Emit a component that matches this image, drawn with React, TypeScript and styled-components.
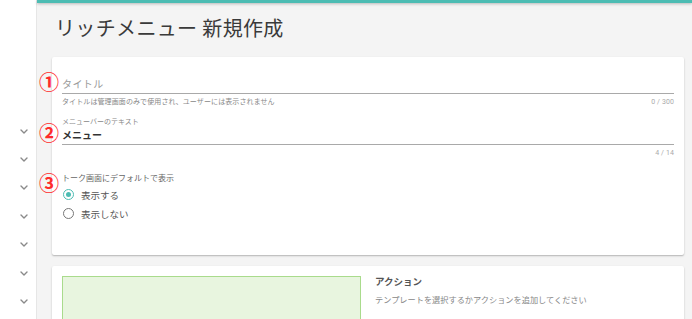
import React from "react";
import styled, { createGlobalStyle } from "styled-components";

const GlobalStyle = createGlobalStyle`
  html, body { margin: 0; padding: 0; }
  body {
    font-family: "Roboto", "Noto Sans CJK JP", sans-serif;
    background: #f4f4f4;
    color: #333;
  }
`;

const Layout = styled.div`
  display: flex;
  width: 692px;
  height: 319px;
  overflow: hidden;
`;

const Sidebar = styled.nav`
  width: 37px;
  flex: 0 0 37px;
  background: #fff;
  border-right: 1px solid #e6e6e6;
  box-shadow: 1px 0 2px rgba(0, 0, 0, 0.04);
  display: flex;
  flex-direction: column;
  align-items: center;
  padding-top: 117px;
  padding-left: 11px;
  box-sizing: border-box;
`;

const ChevronItem = styled.div`
  height: 28.4px;
  flex: 0 0 28.4px;
  display: flex;
  align-items: center;
  justify-content: center;
  color: #8a8a8a;
`;

const Main = styled.main`
  flex: 1;
  display: flex;
  flex-direction: column;
  background: #f4f4f4;
  min-width: 0;
`;

const TopBar = styled.div`
  height: 3px;
  flex: 0 0 3px;
  background: #4cbcb3;
  box-shadow: 0 1px 3px rgba(0, 0, 0, 0.25);
`;

const Content = styled.div`
  padding: 13px 8px 0 15px;
  display: flex;
  flex-direction: column;
  gap: 11px;
`;

const Title = styled.h1`
  margin: 0 0 6px 3px;
  font-family: "Noto Sans CJK JP", sans-serif;
  font-weight: 400;
  font-size: 20px;
  line-height: 24px;
  letter-spacing: 0.35px;
  color: #3a3a3a;
`;

const Card = styled.section<{ $pb?: number }>`
  position: relative;
  background: #fff;
  border-radius: 2px;
  box-shadow: 0 1px 2px rgba(0, 0, 0, 0.22), 0 1px 1px rgba(0, 0, 0, 0.06);
  padding: 10px 10px ${(p) => p.$pb ?? 10}px 10px;
  display: flex;
  flex-direction: column;
`;

const Field = styled.div<{ $mt?: number }>`
  position: relative;
  margin-top: ${(p) => p.$mt ?? 0}px;
`;

const FloatLabel = styled.div`
  height: 9px;
  font-size: 7px;
  line-height: 9px;
  color: #888;
`;

const InputLine = styled.div<{ $filled?: boolean }>`
  height: 17px;
  line-height: 17px;
  font-size: 10px;
  color: ${(p) => (p.$filled ? "#333" : "#999")};
  font-weight: ${(p) => (p.$filled ? 700 : 400)};
  border-bottom: 1px solid #a9a9a9;
  letter-spacing: ${(p) => (p.$filled ? "0" : "0.4px")};
`;

const HelperRow = styled.div`
  margin-top: 4px;
  display: flex;
  justify-content: space-between;
  font-size: 7px;
  line-height: 9px;
  color: #888;
  letter-spacing: 0.1px;
`;

const Counter = styled.span`
  color: #aaa;
  margin-left: auto;
`;

const Annotation = styled.span<{ $top: number }>`
  position: absolute;
  left: -23px;
  top: ${(p) => p.$top}px;
  width: 19px;
  height: 19px;
  font-family: "Noto Sans CJK JP", sans-serif;
  font-size: 20px;
  line-height: 19px;
  font-weight: 700;
  color: #ff2b2b;
  text-align: center;
`;

const GroupLabel = styled.div`
  font-size: 8px;
  line-height: 10px;
  color: #666;
`;

const RadioList = styled.div`
  margin-top: 1px;
  display: flex;
  flex-direction: column;
`;

const RadioRow = styled.label`
  height: 19px;
  display: flex;
  align-items: center;
  gap: 7px;
  padding-left: 1px;
  font-size: 9.5px;
  color: #555;
`;

const RadioCircle = styled.span<{ $checked?: boolean }>`
  width: 11px;
  height: 11px;
  box-sizing: border-box;
  border-radius: 50%;
  border: 1.5px solid ${(p) => (p.$checked ? "#4cbcb3" : "#777")};
  display: flex;
  align-items: center;
  justify-content: center;
  &::after {
    content: "";
    width: 5px;
    height: 5px;
    border-radius: 50%;
    background: ${(p) => (p.$checked ? "#4cbcb3" : "transparent")};
  }
`;

const ActionLayout = styled.div`
  display: flex;
  gap: 14px;
`;

const Preview = styled.div`
  width: 299px;
  height: 200px;
  box-sizing: border-box;
  background: #e8f5df;
  border: 1px solid #a9db8c;
`;

const ActionInfo = styled.div`
  display: flex;
  flex-direction: column;
`;

const ActionTitle = styled.div`
  font-size: 9.5px;
  line-height: 12px;
  font-weight: 700;
  color: #555;
`;

const ActionText = styled.div`
  margin-top: 6px;
  font-size: 8.2px;
  line-height: 12px;
  color: #888;
`;

const Chevron = () => (
  <svg width="8" height="5" viewBox="0 0 8 5" fill="none">
    <path d="M1 1 L4 4 L7 1" stroke="currentColor" strokeWidth="1.4" strokeLinecap="round" strokeLinejoin="round" />
  </svg>
);

export default function App() {
  return (
    <>
      <GlobalStyle />
      <Layout>
        <Sidebar>
          {Array.from({ length: 7 }).map((_, i) => (
            <ChevronItem key={i}>
              <Chevron />
            </ChevronItem>
          ))}
        </Sidebar>
        <Main>
          <TopBar />
          <Content>
            <Title>リッチメニュー 新規作成</Title>
            <Card $pb={32}>
              <Field>
                <Annotation $top={5}>①</Annotation>
                <FloatLabel />
                <InputLine>タイトル</InputLine>
                <HelperRow>
                  <span>タイトルは管理画面のみで使用され、ユーザーには表示されません</span>
                  <Counter>0 / 300</Counter>
                </HelperRow>
              </Field>
              <Field $mt={11}>
                <Annotation $top={5}>②</Annotation>
                <FloatLabel>メニューバーのテキスト</FloatLabel>
                <InputLine $filled>メニュー</InputLine>
                <HelperRow>
                  <Counter>4 / 14</Counter>
                </HelperRow>
              </Field>
              <Field $mt={16}>
                <Annotation $top={-1}>③</Annotation>
                <GroupLabel>トーク画面にデフォルトで表示</GroupLabel>
                <RadioList>
                  <RadioRow>
                    <RadioCircle $checked />
                    表示する
                  </RadioRow>
                  <RadioRow>
                    <RadioCircle />
                    表示しない
                  </RadioRow>
                </RadioList>
              </Field>
            </Card>
            <Card>
              <ActionLayout>
                <Preview />
                <ActionInfo>
                  <ActionTitle>アクション</ActionTitle>
                  <ActionText>テンプレートを選択するかアクションを追加してください</ActionText>
                </ActionInfo>
              </ActionLayout>
            </Card>
          </Content>
        </Main>
      </Layout>
    </>
  );
}
